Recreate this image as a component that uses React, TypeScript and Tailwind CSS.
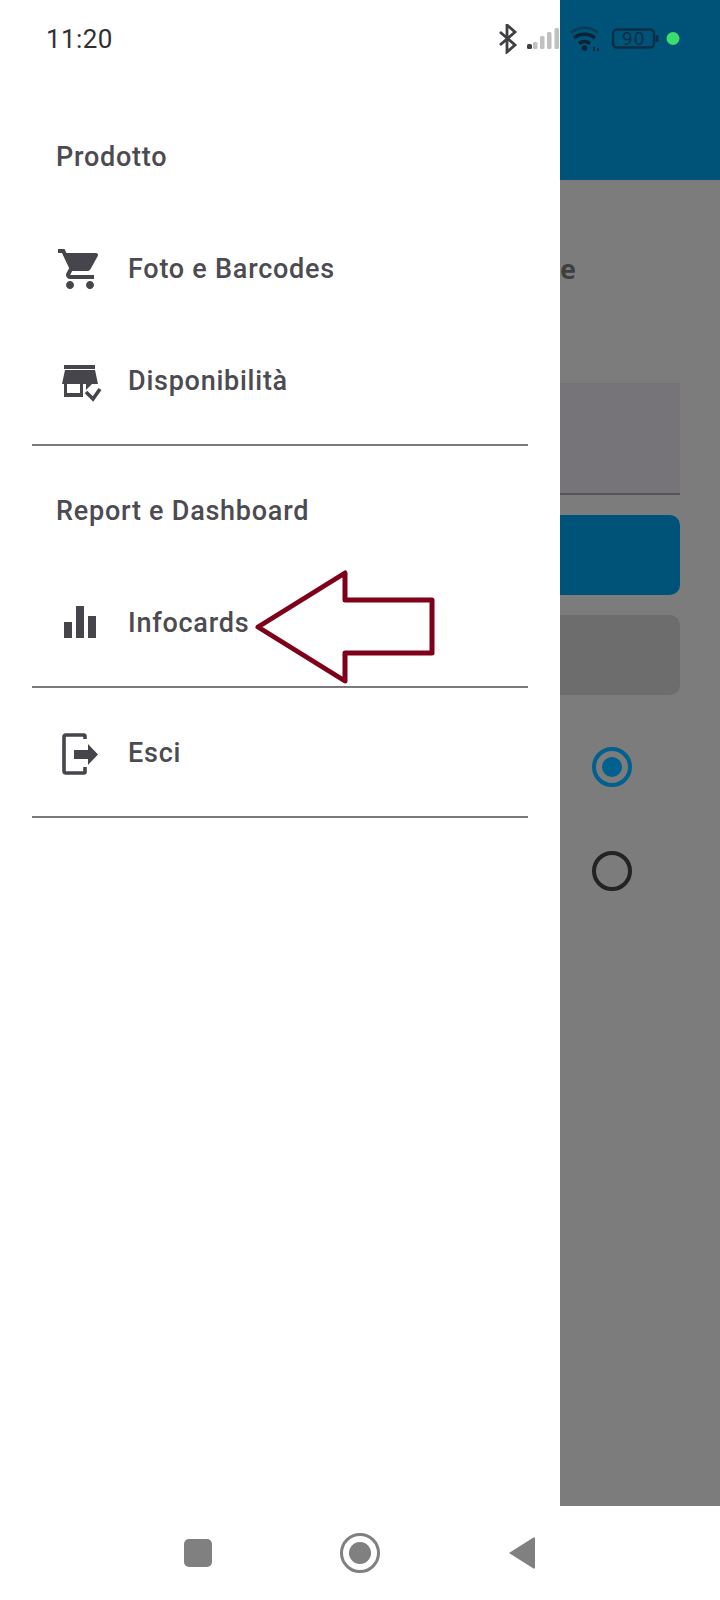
import React from "react";

const Row = ({ icon, label, className }: { icon: React.ReactNode; label: string; className: string }) => (
  <div className={`flex items-center ${className}`}>
    <div className="w-[128px] pl-[56px] shrink-0">{icon}</div>
    <span>{label}</span>
  </div>
);

const Cart = () => (
  <svg width="48" height="48" viewBox="0 0 24 24" fill="#46454b" className="block">
    <path d="M7 18c-1.1 0-1.99.9-1.99 2S5.9 22 7 22s2-.9 2-2-.9-2-2-2zM1 2v2h2l3.6 7.59-1.35 2.45c-.16.28-.25.61-.25.96 0 1.1.9 2 2 2h12v-2H7.42c-.14 0-.25-.11-.25-.25l.03-.12.9-1.63h7.45c.75 0 1.41-.41 1.75-1.03l3.58-6.49c.08-.14.12-.31.12-.48 0-.55-.45-1-1-1H5.21l-.94-2H1zm16 16c-1.1 0-1.99.9-1.99 2s.89 2 1.99 2 2-.9 2-2-.9-2-2-2z" />
  </svg>
);

const Store = () => (
  <svg width="48" height="48" viewBox="0 0 48 48" fill="#46454b" className="block">
    <rect x="8" y="8" width="31" height="4" />
    <path d="M9 13h30l3 14h-6l-6 6v-6H6z" />
    <path fillRule="evenodd" d="M8 27h19v13H8zM11 27v9h13v-9z" />
    <path d="M30 35l7 7 7-10" fill="none" stroke="#46454b" strokeWidth="3.6" />
  </svg>
);

const Bars = () => (
  <svg width="48" height="48" viewBox="0 0 48 48" fill="#46454b" className="block">
    <rect x="8" y="23" width="8" height="16" />
    <rect x="20" y="7" width="8" height="32" />
    <rect x="32" y="17" width="8" height="22" />
  </svg>
);

const Exit = () => (
  <svg width="48" height="48" viewBox="0 0 48 48" fill="none" className="block">
    <path d="M29 9V6a1 1 0 0 0-1-1H10a2 2 0 0 0-2 2v34a2 2 0 0 0 2 2h18a1 1 0 0 0 1-1v-5" stroke="#46454b" strokeWidth="3.6" />
    <path d="M18 20h14v-6l10 10.500-10 10.500v-6H18z" fill="#46454b" />
  </svg>
);

const Radio = ({ on }: { on: boolean }) => (
  <div
    className={`w-[40px] h-[40px] rounded-full border-[4px] flex items-center justify-center ${on ? "border-[#00608e]" : "border-[#232326]"}`}
  >
    {on && <div className="w-[20px] h-[20px] rounded-full bg-[#00608e]" />}
  </div>
);

export default function App() {
  return (
    <div
      className="relative w-[720px] h-[1600px] bg-white overflow-hidden flex flex-col text-[#4c4b51]"
      style={{ fontFamily: "Roboto, sans-serif" }}
    >
      <div className="flex h-[1506px]">
        {/* Drawer */}
        <div className="w-[560px] shrink-0 bg-white flex flex-col text-[27px] tracking-[0.75px] font-medium">
          <div className="h-[78px] pl-[46px] flex items-center text-[26px] tracking-[0.4px] font-normal text-[#303034]">11:20</div>
          <div className="h-[135px] pl-[56px] pt-[23px] flex items-center">Prodotto</div>
          <Row icon={<Cart />} label="Foto e Barcodes" className="h-[112px]" />
          <Row icon={<Store />} label="Disponibilità" className="h-[112px]" />
          <div className="mt-[7px] ml-[32px] w-[496px] h-[2px] bg-[#7a797d]" />
          <div className="h-[121px] pl-[56px] pt-[10px] flex items-center">Report e Dashboard</div>
          <Row icon={<Bars />} label="Infocards" className="h-[112px]" />
          <div className="mt-[7px] ml-[32px] w-[496px] h-[2px] bg-[#7a797d]" />
          <Row icon={<Exit />} label="Esci" className="h-[126px] pt-[5px]" />
          <div className="mt-[2px] ml-[32px] w-[496px] h-[2px] bg-[#7a797d]" />
        </div>

        {/* Dimmed page behind the drawer */}
        <div className="flex-1 flex flex-col bg-[#7c7c7c]">
          <div className="h-[180px] bg-[#005378]" />
          <div className="pr-[40px] flex flex-col">
            <div
              className="h-[203px] pt-[65px] text-[27px] font-bold leading-[48px] text-[#3f3f3f]"
              style={{ fontFamily: "'Open Sans', sans-serif" }}
            >
              <span className="block w-[16px] overflow-hidden">e</span>
            </div>
            <div className="h-[112px] bg-[#767478] border-b-[2px] border-[#56545a]" />
            <div className="mt-[20px] h-[80px] bg-[#005378] rounded-r-[10px]" />
            <div className="mt-[20px] h-[80px] bg-[#6d6d6d] rounded-r-[10px]" />
            <div className="mt-[52px] ml-[32px] flex flex-col gap-[64px]">
              <Radio on />
              <Radio on={false} />
            </div>
          </div>
        </div>
      </div>

      {/* Navigation bar */}
      <div className="flex-1 bg-white flex items-center">
        <div className="w-[720px] flex items-center">
          <div className="ml-[184px] w-[28px] h-[28px] rounded-[5px] bg-[#808080]" />
          <div className="ml-[128px] w-[40px] h-[40px] rounded-full border-[3px] border-[#808080] flex items-center justify-center">
            <div className="w-[22px] h-[22px] rounded-full bg-[#808080]" />
          </div>
          <svg width="28" height="34" viewBox="0 0 28 34" className="ml-[128px]">
            <path d="M1 17L25.5 1.500a1 1 0 0 1 1.500 1v29a1 1 0 0 1-1.500 1z" fill="#808080" />
          </svg>
        </div>
      </div>

      {/* Status icons overlay the drawer and the page */}
      <div className="absolute left-[498px] top-[24px]">
        <svg width="190" height="30" viewBox="0 0 190 30" fill="none">
          <path d="M2 8l15 13-8 7V1l8 7L2 21" stroke="#404044" strokeWidth="2.800" />
          <rect x="29" y="20" width="5" height="5" rx="1.500" fill="#404044" />
          <rect x="35" y="18" width="4.500" height="7" rx="1.500" fill="#c0c0c0" />
          <rect x="42" y="12" width="4.500" height="13" rx="1.500" fill="#c0c0c0" />
          <rect x="49" y="8" width="4.500" height="17" rx="1.500" fill="#c0c0c0" />
          <rect x="56.500" y="4" width="4.500" height="21" rx="1.500" fill="#c0c0c0" />
          <path d="M73 9c8-7 19-7 27 0" stroke="#0b3a55" strokeWidth="2.400" />
          <path d="M76 14c6-5 15-5 21 0" stroke="#0d2233" strokeWidth="3.400" />
          <path d="M81 19.500c3.500-2.500 7.500-2.500 11 0" stroke="#0d2233" strokeWidth="3.400" />
          <circle cx="86.500" cy="24" r="2.800" fill="#0d2233" />
          <path d="M96 27v-4M100 27v-3" stroke="#0d2233" strokeWidth="1.500" />
          <rect x="115" y="5.500" width="41" height="18" rx="4" stroke="#0d2f45" strokeWidth="2.400" />
          <rect x="157.500" y="11" width="3" height="7" rx="1" fill="#0d2f45" />
          <circle cx="175" cy="14.500" r="6.500" fill="#3ddc6e" />
        </svg>
      </div>
      <span className="absolute left-[622px] top-[28px] text-[19px] leading-[22px] tracking-[1px] text-[#0d2f45]">90</span>

      {/* Hand-drawn arrow annotation */}
      <svg width="190" height="120" viewBox="0 0 190 120" fill="none" className="absolute left-[252px] top-[567px]">
        <path d="M6 60L93 6V33H180V86H93V114z" stroke="#7f0019" strokeWidth="5" strokeLinejoin="round" />
      </svg>
    </div>
  );
}
